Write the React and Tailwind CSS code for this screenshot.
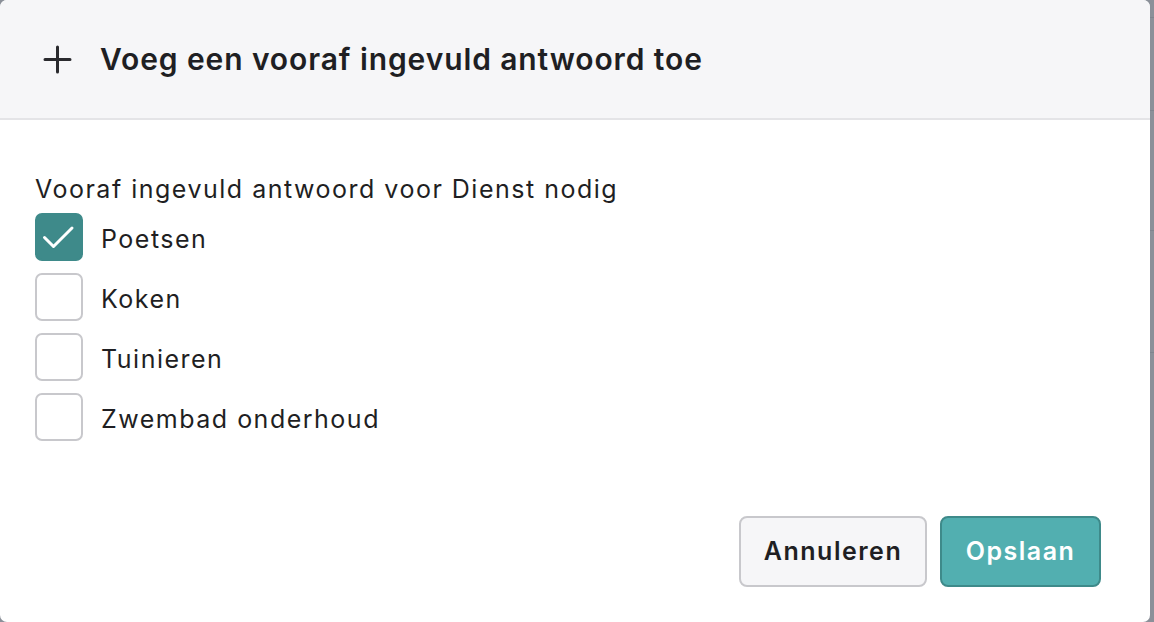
import { useState } from "react";

// Modal: add a prefilled answer
const OPTIONS = ["Poetsen", "Koken", "Tuinieren", "Zwembad onderhoud"];

function Checkbox({ checked, onToggle }) {
  return (
    <button
      type="button"
      onClick={onToggle}
      className={`w-[48px] h-[48px] shrink-0 rounded-[7px] flex items-center justify-center ${
        checked
          ? "bg-[#3e8a8a] border-2 border-[#3e8a8a]"
          : "bg-white border-2 border-[#c8c8cc]"
      }`}
    >
      {checked && (
        <svg width="48" height="48" viewBox="0 0 48 48" fill="none" className="-m-[2px]">
          <polyline
            points="9.5,24.5 18.5,33.5 37,15"
            stroke="white"
            strokeWidth="3"
            strokeLinecap="round"
            strokeLinejoin="round"
          />
        </svg>
      )}
    </button>
  );
}

export default function App() {
  const [selected, setSelected] = useState(["Poetsen"]);

  const toggle = (name) =>
    setSelected((s) => (s.includes(name) ? s.filter((x) => x !== name) : [...s, name]));

  return (
    <div className="h-[622px] w-[1154px] bg-[#8b9099] flex font-['Inter',sans-serif] overflow-hidden">
      <div className="w-[1150px] h-[622px] shrink-0 bg-white rounded-[7px] overflow-hidden flex flex-col">
        {/* header */}
        <div className="h-[120px] shrink-0 bg-[#f6f6f8] border-b-2 border-[#e4e4e7] flex items-center pl-[43px] gap-[28px]">
          <svg width="29" height="29" viewBox="0 0 29 29" fill="none">
            <path
              d="M14.5 2v25M2 14.5h25"
              stroke="#2a2a2e"
              strokeWidth="3"
              strokeLinecap="round"
            />
          </svg>
          <h2 className="text-[30px] leading-[36px] font-semibold text-[#1f1f23] tracking-[0.9px]">
            Voeg een vooraf ingevuld antwoord toe
          </h2>
        </div>

        {/* body */}
        <div className="flex-1 flex flex-col pl-[35px] pt-[55px]">
          <div className="text-[25px] leading-[28px] text-[#1f1f23] tracking-[1.5px]">
            Vooraf ingevuld antwoord voor Dienst nodig
          </div>
          <div className="mt-[10px] flex flex-col gap-[12px]">
            {OPTIONS.map((o) => (
              <label key={o} className="flex items-center gap-[18px] h-[48px] cursor-pointer">
                <Checkbox checked={selected.includes(o)} onToggle={() => toggle(o)} />
                <span className="mt-[4px] text-[25px] leading-[28px] text-[#1f1f23] tracking-[1.5px]">
                  {o}
                </span>
              </label>
            ))}
          </div>
        </div>

        {/* footer */}
        <div className="flex justify-end gap-[13px] pr-[49px] pb-[35px]">
          <button
            type="button"
            className="h-[71px] w-[188px] rounded-[8px] border-2 border-[#c8c8cc] bg-[#f6f6f8] text-[25px] font-semibold text-[#1f1f23] tracking-[1.5px]"
          >
            Annuleren
          </button>
          <button
            type="button"
            className="h-[71px] w-[161px] rounded-[8px] border-2 border-[#3e8a8a] bg-[#52afb0] text-[25px] font-semibold text-white tracking-[1.5px]"
          >
            Opslaan
          </button>
        </div>
      </div>

      {/* page behind the backdrop */}
      <div className="flex-1 flex flex-col">
        <div className="h-[18px] border-b border-[#7f858e]" />
        <div className="h-[93px] border-b border-[#7f858e]" />
        <div className="h-[120px] border-b border-[#7f858e]" />
        <div className="h-[122px] border-b border-[#7f858e]" />
      </div>
    </div>
  );
}
